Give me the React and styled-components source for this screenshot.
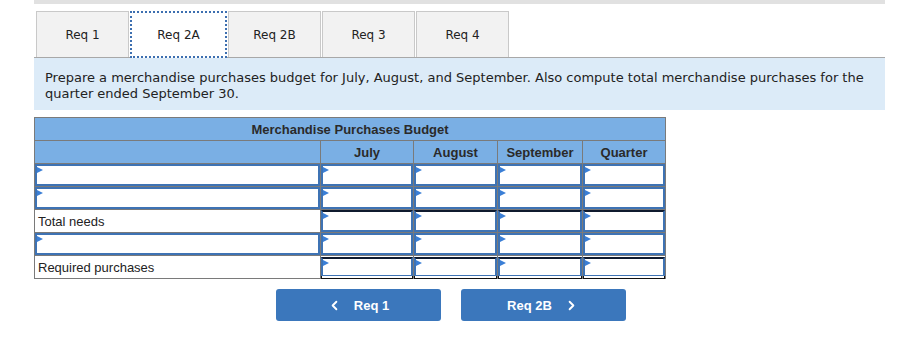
import React from "react";
import styled, { createGlobalStyle, css } from "styled-components";
import { ChevronLeft, ChevronRight } from "lucide-react";

const GlobalStyle = createGlobalStyle`
  body {
    margin: 0;
    background: #fff;
    font-family: "DejaVu Sans", Verdana, sans-serif;
  }
`;

const Page = styled.div`
  width: 851px;
  margin-left: 34px;
`;

const TopBar = styled.div`
  height: 4px;
  background: #e1e1e1;
`;

const TabRow = styled.div`
  display: flex;
  gap: 1px;
  margin-top: 7px;
  padding-left: 2px;
  border-bottom: 1px solid #a8a8a8;
`;

const Tab = styled.div`
  width: 91px;
  height: 46px;
  padding-top: 1px;
  box-sizing: border-box;
  display: flex;
  align-items: center;
  justify-content: center;
  font-size: 12px;
  color: #222;
  background: ${(p) => (p.active ? "#fff" : "#f2f2f2")};
  border: 1px solid #c9c9c9;
  border-bottom: none;
  width: 93px;
  ${(p) =>
    p.active &&
    css`
      border: 2px dotted #3d6fb0;
      height: 47px;
      margin-bottom: -1px;
      width: 97px;
    `}
`;

const Instructions = styled.div`
  background: #dcebf8;
  padding: 12px 11px 8px 11px;
  font-size: 13px;
  line-height: 16px;
  color: #222;
`;

const Budget = styled.table`
  margin-top: 7px;
  border-collapse: collapse;
  font-family: "Liberation Sans", Arial, sans-serif;
  font-size: 13px;
  color: #222;
`;

const Title = styled.th`
  background: #7aafe4;
  border: 1px solid #7a7a7a;
  height: 22px;
  padding: 0;
  font-size: 13px;
  color: #2a2a2a;
`;

const Head = styled.th`
  background: #7aafe4;
  border: 1px solid #7a7a7a;
  height: 22px;
  padding: 0;
  width: ${(p) => p.w}px;
  font-size: 13px;
  color: #2a2a2a;
`;

const Cell = styled.td`
  border: 1px solid #7a7a7a;
  height: 22px;
  padding: 0;
  vertical-align: bottom;
  ${(p) =>
    p.label &&
    css`
      padding-left: 3px;
      vertical-align: middle;
      font-size: 13px;
    `}
`;

const InputBox = styled.div`
  position: relative;
  height: 18px;
  background: #fff;
  border: 2px solid #3e73b4;
  ${(p) =>
    p.total &&
    css`
      border-top: 2px solid #0f1a2e;
    `}
  ${(p) =>
    p.final &&
    css`
      border-bottom: 1px solid #3e73b4;
      box-shadow: 0 3px 0 -1px #fff, 0 3px 0 0 #111;
      margin-bottom: 2px;
      height: 16px;
    `}
  &::before {
    content: "";
    position: absolute;
    left: 0;
    top: 1px;
    border-left: 6px solid #3b7fd6;
    border-top: 3px solid transparent;
    border-bottom: 3px solid transparent;
  }
`;

const Nav = styled.div`
  display: flex;
  justify-content: center;
  gap: 20px;
  margin-top: 10px;
  padding-right: 18px;
`;

const NavButton = styled.div`
  width: 165px;
  height: 32px;
  border-radius: 3px;
  background: #3b77bc;
  color: #fff;
  display: flex;
  align-items: center;
  justify-content: center;
  gap: 12px;
  font-family: "Liberation Sans", Arial, sans-serif;
  font-weight: bold;
  font-size: 13px;
`;

const months = [
  { name: "July", w: 92 },
  { name: "August", w: 83 },
  { name: "September", w: 84 },
  { name: "Quarter", w: 82 },
];

const rows = [
  { label: null },
  { label: null },
  { label: "Total needs", total: true },
  { label: null },
  { label: "Required purchases", total: true, final: true },
];

export default function App() {
  return (
    <>
      <GlobalStyle />
      <Page>
        <TopBar />
        <TabRow>
          <Tab>Req 1</Tab>
          <Tab active>Req 2A</Tab>
          <Tab>Req 2B</Tab>
          <Tab>Req 3</Tab>
          <Tab>Req 4</Tab>
        </TabRow>
        <Instructions>
          Prepare a merchandise purchases budget for July, August, and September. Also compute total
          merchandise purchases for the quarter ended September 30.
        </Instructions>
        <Budget>
          <thead>
            <tr>
              <Title colSpan={5}>Merchandise Purchases Budget</Title>
            </tr>
            <tr>
              <Head w={285} />
              {months.map((m) => (
                <Head key={m.name} w={m.w}>
                  {m.name}
                </Head>
              ))}
            </tr>
          </thead>
          <tbody>
            {rows.map((r, i) => (
              <tr key={i}>
                {r.label ? (
                  <Cell label>{r.label}</Cell>
                ) : (
                  <Cell>
                    <InputBox />
                  </Cell>
                )}
                {months.map((m) => (
                  <Cell key={m.name}>
                    <InputBox total={r.total} final={r.final} />
                  </Cell>
                ))}
              </tr>
            ))}
          </tbody>
        </Budget>
        <Nav>
          <NavButton>
            <ChevronLeft size={15} strokeWidth={3} />
            Req 1
          </NavButton>
          <NavButton>
            Req 2B
            <ChevronRight size={15} strokeWidth={3} />
          </NavButton>
        </Nav>
      </Page>
    </>
  );
}
